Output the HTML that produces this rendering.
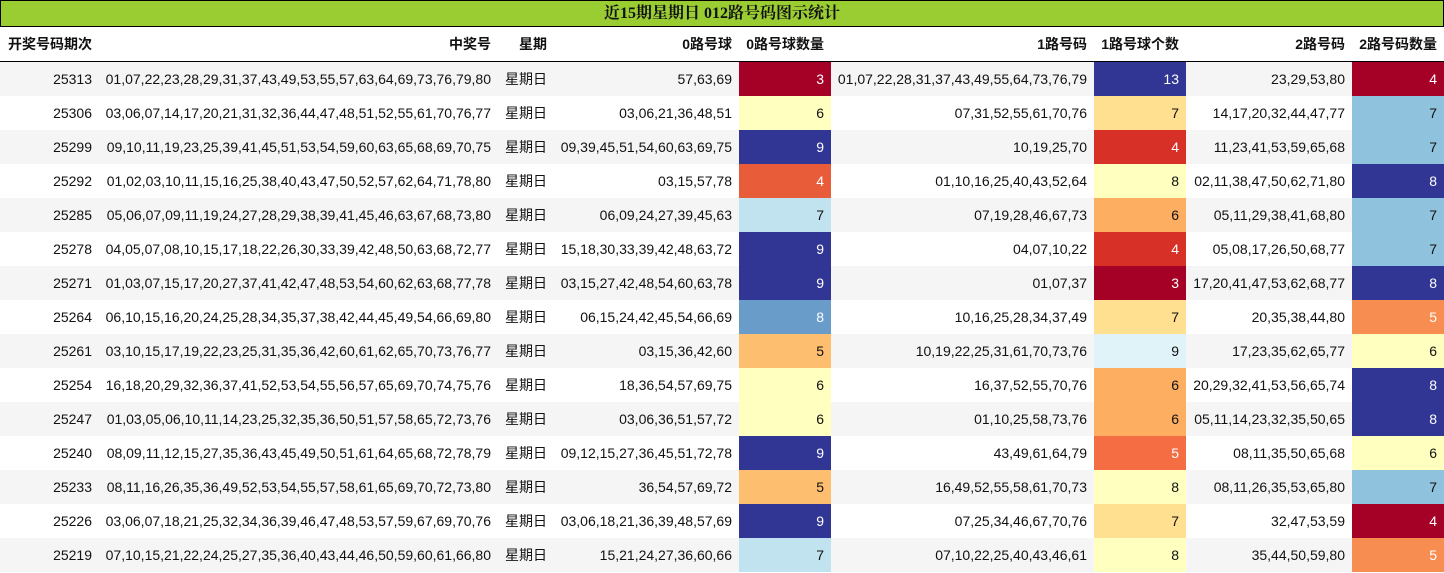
<!DOCTYPE html><html><head><meta charset="utf-8"><style>
body{margin:0;background:#fff;font-family:"Liberation Sans","Noto Sans CJK SC",sans-serif;font-size:14px;color:#111}
.t{position:absolute;left:0;top:0;width:1442px;height:25px;background:#9acd32;border:1px solid #000;text-align:center;font:bold 16px/25px "Liberation Serif","Noto Serif CJK SC",serif}
table{position:absolute;left:0;top:27px;border-collapse:collapse;table-layout:fixed;width:1444px}
td,th{padding:0 7px 0 0;text-align:right;white-space:nowrap;overflow:hidden}
th{height:34px;font-weight:bold;border-bottom:1px solid #000}
td{height:34px;line-height:34px;padding-top:0;padding-bottom:0;box-sizing:border-box}
tr:nth-child(even) td{background:#f5f5f5}
.w{color:#fff}
</style></head><body>
<div class="t">近15期星期日 012路号码图示统计</div>
<table>
<colgroup><col style="width:99px"><col style="width:399px"><col style="width:56px"><col style="width:185px"><col style="width:92px"><col style="width:263px"><col style="width:92px"><col style="width:166px"><col style="width:92px"></colgroup>
<tr><th>开奖号码期次</th><th>中奖号</th><th>星期</th><th>0路号球</th><th>0路号球数量</th><th>1路号码</th><th>1路号球个数</th><th>2路号码</th><th>2路号码数量</th></tr>
<tr><td>25313</td><td>01,07,22,23,28,29,31,37,43,49,53,55,57,63,64,69,73,76,79,80</td><td>星期日</td><td>57,63,69</td><td class="w" style="background:#a50026!important">3</td><td>01,07,22,28,31,37,43,49,55,64,73,76,79</td><td class="w" style="background:#313695!important">13</td><td>23,29,53,80</td><td class="w" style="background:#a50026!important">4</td></tr>
<tr><td>25306</td><td>03,06,07,14,17,20,21,31,32,36,44,47,48,51,52,55,61,70,76,77</td><td>星期日</td><td>03,06,21,36,48,51</td><td style="background:#ffffbf">6</td><td>07,31,52,55,61,70,76</td><td style="background:#fee090">7</td><td>14,17,20,32,44,47,77</td><td style="background:#8fc3dd">7</td></tr>
<tr><td>25299</td><td>09,10,11,19,23,25,39,41,45,51,53,54,59,60,63,65,68,69,70,75</td><td>星期日</td><td>09,39,45,51,54,60,63,69,75</td><td class="w" style="background:#313695!important">9</td><td>10,19,25,70</td><td class="w" style="background:#d73027!important">4</td><td>11,23,41,53,59,65,68</td><td style="background:#8fc3dd!important">7</td></tr>
<tr><td>25292</td><td>01,02,03,10,11,15,16,25,38,40,43,47,50,52,57,62,64,71,78,80</td><td>星期日</td><td>03,15,57,78</td><td class="w" style="background:#e95c39">4</td><td>01,10,16,25,40,43,52,64</td><td style="background:#ffffbf">8</td><td>02,11,38,47,50,62,71,80</td><td class="w" style="background:#313695">8</td></tr>
<tr><td>25285</td><td>05,06,07,09,11,19,24,27,28,29,38,39,41,45,46,63,67,68,73,80</td><td>星期日</td><td>06,09,24,27,39,45,63</td><td style="background:#c0e3ef!important">7</td><td>07,19,28,46,67,73</td><td style="background:#fdae61!important">6</td><td>05,11,29,38,41,68,80</td><td style="background:#8fc3dd!important">7</td></tr>
<tr><td>25278</td><td>04,05,07,08,10,15,17,18,22,26,30,33,39,42,48,50,63,68,72,77</td><td>星期日</td><td>15,18,30,33,39,42,48,63,72</td><td class="w" style="background:#313695">9</td><td>04,07,10,22</td><td class="w" style="background:#d73027">4</td><td>05,08,17,26,50,68,77</td><td style="background:#8fc3dd">7</td></tr>
<tr><td>25271</td><td>01,03,07,15,17,20,27,37,41,42,47,48,53,54,60,62,63,68,77,78</td><td>星期日</td><td>03,15,27,42,48,54,60,63,78</td><td class="w" style="background:#313695!important">9</td><td>01,07,37</td><td class="w" style="background:#a50026!important">3</td><td>17,20,41,47,53,62,68,77</td><td class="w" style="background:#313695!important">8</td></tr>
<tr><td>25264</td><td>06,10,15,16,20,24,25,28,34,35,37,38,42,44,45,49,54,66,69,80</td><td>星期日</td><td>06,15,24,42,45,54,66,69</td><td class="w" style="background:#6a9cc9">8</td><td>10,16,25,28,34,37,49</td><td style="background:#fee090">7</td><td>20,35,38,44,80</td><td class="w" style="background:#f88d52">5</td></tr>
<tr><td>25261</td><td>03,10,15,17,19,22,23,25,31,35,36,42,60,61,62,65,70,73,76,77</td><td>星期日</td><td>03,15,36,42,60</td><td style="background:#fdbf6f!important">5</td><td>10,19,22,25,31,61,70,73,76</td><td style="background:#e0f3f8!important">9</td><td>17,23,35,62,65,77</td><td style="background:#ffffbf!important">6</td></tr>
<tr><td>25254</td><td>16,18,20,29,32,36,37,41,52,53,54,55,56,57,65,69,70,74,75,76</td><td>星期日</td><td>18,36,54,57,69,75</td><td style="background:#ffffbf">6</td><td>16,37,52,55,70,76</td><td style="background:#fdae61">6</td><td>20,29,32,41,53,56,65,74</td><td class="w" style="background:#313695">8</td></tr>
<tr><td>25247</td><td>01,03,05,06,10,11,14,23,25,32,35,36,50,51,57,58,65,72,73,76</td><td>星期日</td><td>03,06,36,51,57,72</td><td style="background:#ffffbf!important">6</td><td>01,10,25,58,73,76</td><td style="background:#fdae61!important">6</td><td>05,11,14,23,32,35,50,65</td><td class="w" style="background:#313695!important">8</td></tr>
<tr><td>25240</td><td>08,09,11,12,15,27,35,36,43,45,49,50,51,61,64,65,68,72,78,79</td><td>星期日</td><td>09,12,15,27,36,45,51,72,78</td><td class="w" style="background:#313695">9</td><td>43,49,61,64,79</td><td class="w" style="background:#f46d43">5</td><td>08,11,35,50,65,68</td><td style="background:#ffffbf">6</td></tr>
<tr><td>25233</td><td>08,11,16,26,35,36,49,52,53,54,55,57,58,61,65,69,70,72,73,80</td><td>星期日</td><td>36,54,57,69,72</td><td style="background:#fdbf6f!important">5</td><td>16,49,52,55,58,61,70,73</td><td style="background:#ffffbf!important">8</td><td>08,11,26,35,53,65,80</td><td style="background:#8fc3dd!important">7</td></tr>
<tr><td>25226</td><td>03,06,07,18,21,25,32,34,36,39,46,47,48,53,57,59,67,69,70,76</td><td>星期日</td><td>03,06,18,21,36,39,48,57,69</td><td class="w" style="background:#313695">9</td><td>07,25,34,46,67,70,76</td><td style="background:#fee090">7</td><td>32,47,53,59</td><td class="w" style="background:#a50026">4</td></tr>
<tr><td>25219</td><td>07,10,15,21,22,24,25,27,35,36,40,43,44,46,50,59,60,61,66,80</td><td>星期日</td><td>15,21,24,27,36,60,66</td><td style="background:#c0e3ef!important">7</td><td>07,10,22,25,40,43,46,61</td><td style="background:#ffffbf!important">8</td><td>35,44,50,59,80</td><td class="w" style="background:#f88d52!important">5</td></tr>
</table>
</body></html>
